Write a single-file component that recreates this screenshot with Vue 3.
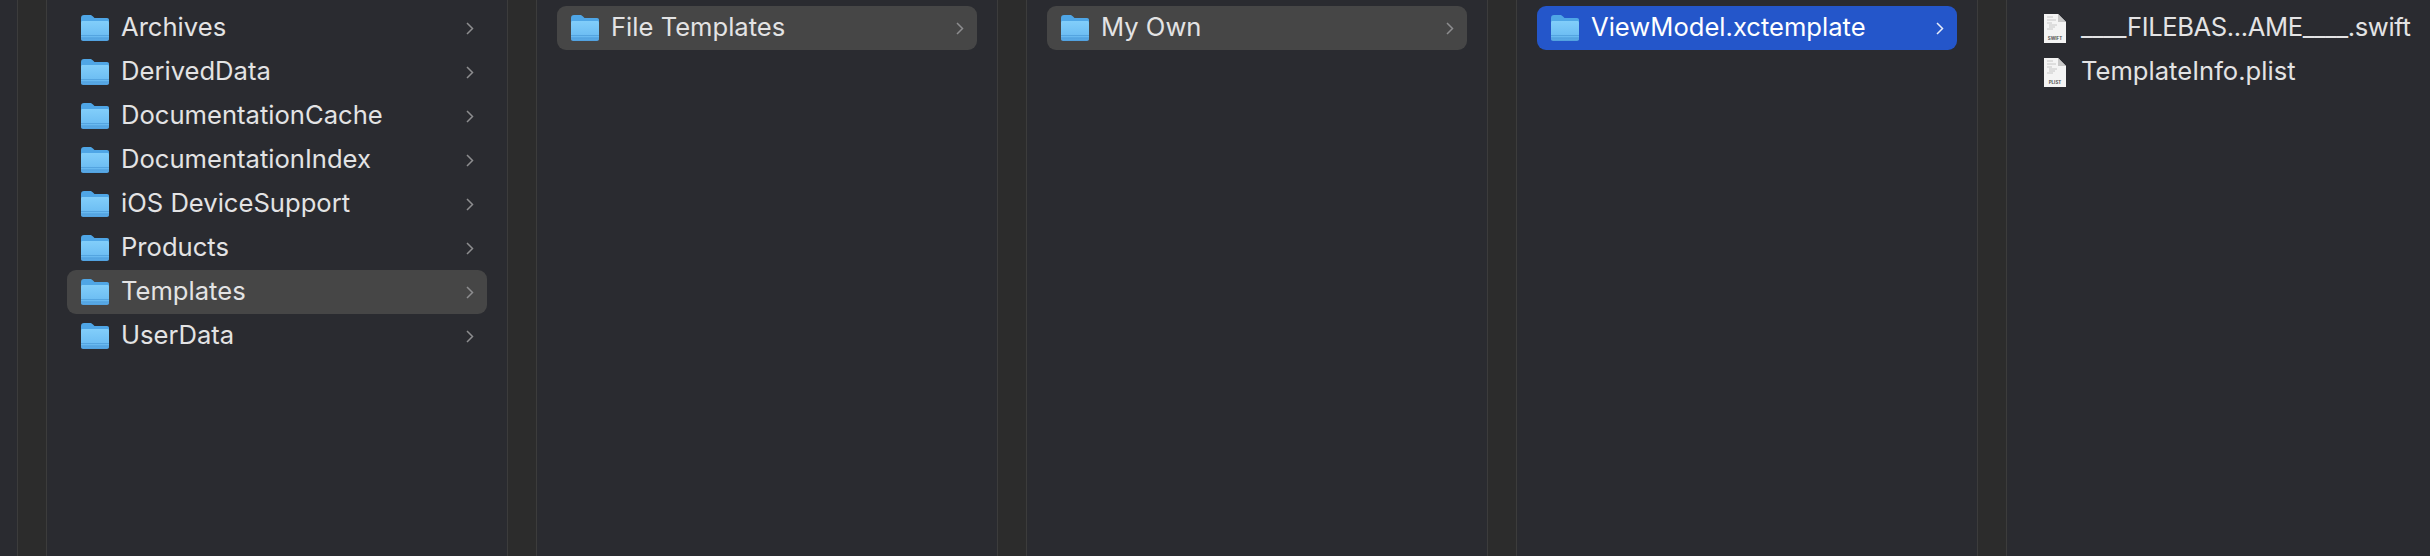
<script setup>
const columns = [
  {
    items: [
      { name: 'Archives' },
      { name: 'DerivedData' },
      { name: 'DocumentationCache' },
      { name: 'DocumentationIndex' },
      { name: 'iOS DeviceSupport' },
      { name: 'Products' },
      { name: 'Templates', state: 'inactive' },
      { name: 'UserData' }
    ]
  },
  { items: [{ name: 'File Templates', state: 'inactive' }] },
  { items: [{ name: 'My Own', state: 'inactive' }] },
  { items: [{ name: 'ViewModel.xctemplate', state: 'active' }] }
];

const files = [
  { name: '____FILEBAS...AME____.swift', ext: 'SWIFT', tight: true },
  { name: 'TemplateInfo.plist', ext: 'PLIST' }
];
</script>

<template>
  <div class="browser">
    <div class="edge"></div>
    <template v-for="(col, i) in columns" :key="i">
      <div class="gutter"></div>
      <div class="pane">
        <div v-for="item in col.items" :key="item.name" class="row" :class="item.state">
          <svg class="folder" viewBox="0 0 28 26">
            <defs>
              <linearGradient :id="'body' + i + item.name.length" x1="0" y1="0" x2="0" y2="1">
                <stop offset="0" stop-color="#82cefa" />
                <stop offset="0.75" stop-color="#6cbdf3" />
                <stop offset="1" stop-color="#4f9fde" />
              </linearGradient>
            </defs>
            <path d="M0 3C0 1 1 0 3 0H9C10.500 0 11 .6 12 1.500L13.500 3H26C27.300 3 28 3.700 28 5V9H0Z" fill="#4fa6e6" />
            <path d="M1.500 6H26.500C27.400 6 28 6.600 28 7.500V24C28 25.200 27.200 26 26 26H2C.8 26 0 25.200 0 24V7.500C0 6.600.6 6 1.500 6Z" :fill="'url(#body' + i + item.name.length + ')'" />
            <path d="M0 20.500H28M0 23H28" stroke="#3f8fd0" stroke-opacity=".55" stroke-width="1" />
          </svg>
          <span class="label">{{ item.name }}</span>
          <svg class="chevron" viewBox="0 0 8 13">
            <path d="M1 1L6.500 6.500L1 12" fill="none" stroke="currentColor" stroke-width="1.500" />
          </svg>
        </div>
      </div>
    </template>
    <div class="gutter"></div>
    <div class="pane last">
      <div v-for="file in files" :key="file.name" class="row">
        <svg class="doc" viewBox="0 0 22 29">
          <path d="M0 0H14L22 8V29H0Z" fill="#f4f4f4" />
          <path d="M14 0L22 8H14Z" fill="#c9c9c9" />
          <path d="M3 3H9M3 6H12M3 9H8M5 11H13M5 13H11M3 15H9" stroke="#bdbdbd" stroke-width=".8" />
          <text x="11" y="26" text-anchor="middle" class="ext">{{ file.ext }}</text>
        </svg>
        <span class="label" :class="{ tight: file.tight }">{{ file.name }}</span>
      </div>
    </div>
  </div>
</template>

<style scoped>
.browser {
  display: flex;
  width: 2430px;
  height: 556px;
  overflow: hidden;
  background: #2a2b30;
  font-family: Inter, "Liberation Sans", sans-serif;
  color: #e3e3e4;
}
.edge {
  width: 17px;
  flex: none;
}
.gutter {
  width: 30px;
  flex: none;
  box-sizing: border-box;
  background: #2c2c2c;
  border-left: 1px solid #3c3c3c;
  border-right: 1px solid #3c3c3c;
}
.pane {
  width: 460px;
  flex: none;
  padding: 6px 20px 0;
  box-sizing: border-box;
}
.pane.last {
  flex: 1;
  width: auto;
  padding-left: 23px;
}
.row {
  display: flex;
  align-items: center;
  height: 44px;
  padding: 0 13px 0 14px;
  border-radius: 9px;
  box-sizing: border-box;
}
.row.inactive {
  background: #464646;
}
.row.active {
  background: #2456ca;
  color: #fff;
}
.folder {
  width: 28px;
  height: 26px;
  flex: none;
  margin-right: 12px;
}
.doc {
  width: 22px;
  height: 29px;
  flex: none;
  margin-right: 15px;
}
.ext {
  font-size: 4.500px;
  font-weight: 700;
  fill: #555;
}
.label {
  font-size: 25.600px;
  white-space: nowrap;
  flex: 1;
  padding-bottom: 3px;
}
.label.tight {
  letter-spacing: -0.4px;
}
.chevron {
  width: 8px;
  height: 13px;
  flex: none;
  color: #8d8d8f;
}
.row.active .chevron {
  color: #e6ecfa;
}
</style>
